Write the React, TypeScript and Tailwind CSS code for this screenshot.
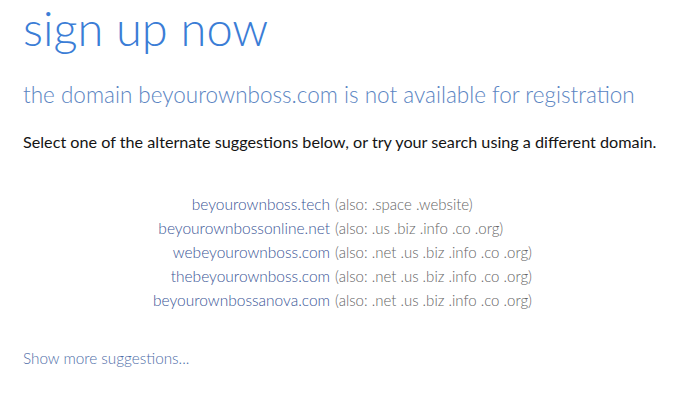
const suggestions = [
  { domain: "beyourownboss.tech", also: "(also: .space .website)" },
  { domain: "beyourownbossonline.net", also: "(also: .us .biz .info .co .org)" },
  { domain: "webeyourownboss.com", also: "(also: .net .us .biz .info .co .org)" },
  { domain: "thebeyourownboss.com", also: "(also: .net .us .biz .info .co .org)" },
  { domain: "beyourownbossanova.com", also: "(also: .net .us .biz .info .co .org)" },
];

export default function App() {
  return (
    <div className="min-h-screen bg-white px-[23px] font-['Lato',sans-serif] font-light">
      <h1 className="text-[47px] leading-[56px] text-[#3b7dd6]">sign up now</h1>
      <h2 className="mt-[24px] text-[22.5px] leading-[30px] text-[#5a84c2] whitespace-nowrap">
        the domain beyourownboss.com is not available for registration
      </h2>
      <p className="mt-[22px] text-[16.2px] leading-[20px] text-[#141414] font-normal whitespace-nowrap">
        Select one of the alternate suggestions below, or try your search using a different domain.
      </p>
      <div className="mt-[40px] flex justify-center">
        <div className="grid grid-cols-[auto_auto] gap-x-[5px] text-[15.5px] leading-[24px]">
          {suggestions.map((s) => (
            <div key={s.domain} className="contents">
              <a className="text-right text-[#3a5596]">{s.domain}</a>
              <span className="text-[15px] text-[#666666]">{s.also}</span>
            </div>
          ))}
        </div>
      </div>
      <a className="block mt-[36px] text-[15.3px] leading-[20px] text-[#4f6ea8]">Show more suggestions...</a>
    </div>
  );
}
